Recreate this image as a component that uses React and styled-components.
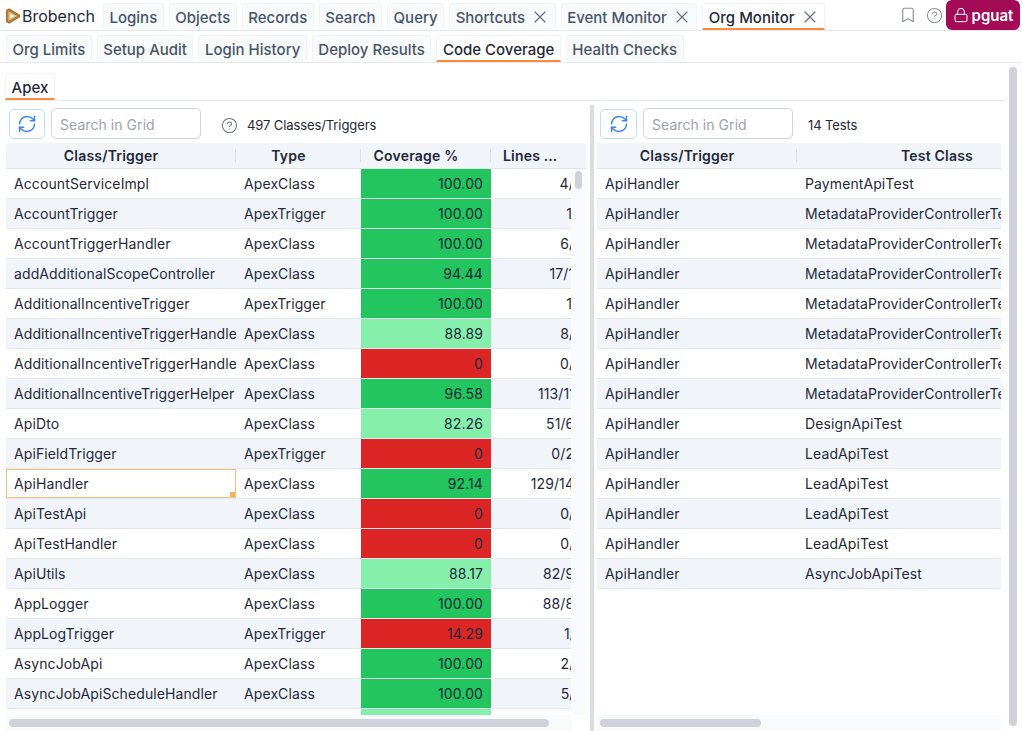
import React from 'react';
import styled, {createGlobalStyle} from 'styled-components';
import {RefreshCw, Bookmark, CircleHelp, X, Lock} from 'lucide-react';

const GlobalStyle = createGlobalStyle`
html, body {
  margin: 0;
  padding: 0;
  height: 100%;
  overflow: hidden;
  background: #fff;
  font-family: Inter, "Liberation Sans", sans-serif;
  font-size: 14px;
  color: #1e293b;
}
* { box-sizing: border-box; }
`;

const Page = styled.div`
width: 1022px;
height: 731px;
display: flex;
flex-direction: column;
overflow: hidden;
`;

const TopBar = styled.div`
height: 31px;
flex: none;
display: flex;
align-items: flex-end;
padding-left: 5px;
border-bottom: 1px solid #e5e9f0;
`;

const Brand = styled.div`
display: flex;
align-items: center;
width: 98px;
height: 30px;
padding-top: 2px;
font-size: 16px;
color: #1f2937;
`;

const BrandIcon = styled.svg`
margin-right: 1px;
flex: none;
`;

const TabRow = styled.div`
display: flex;
gap: 5px;
`;

const Tab = styled.div`
height: 27px;
padding: 2px 5.5px 0;
display: flex;
align-items: center;
font-size: 15px;
font-weight: 500;
white-space: nowrap;
border-radius: 3px 3px 0 0;
border: 1px solid #f1f4f8;
border-bottom: 2px solid ${props => props.$active ? '#fb8c3c' : 'transparent'};
background: ${props => props.$active ? '#fff' : '#f8fafc'};
color: ${props => props.$active ? '#1e293b' : '#475569'};
`;

const TabClose = styled(X)`
color: #64748b;
margin: 0 -1px 0 5px;
flex: none;
`;

const TopRight = styled.div`
margin-left: auto;
display: flex;
align-items: center;
height: 30px;
padding-right: 2px;
color: #8b8f96;
`;

const IconSlot = styled.div`
width: 26px;
display: flex;
justify-content: center;
`;

const OrgButton = styled.div`
width: 74px;
height: 30px;
margin-left: -1px;
border-radius: 6px;
background: #a30b57;
color: #fff;
font-size: 15px;
font-weight: 600;
display: flex;
align-items: center;
justify-content: center;
gap: 3px;
`;

const SubBar = styled.div`
height: 32px;
flex: none;
display: flex;
align-items: flex-end;
padding-left: 6px;
border-bottom: 1px solid #e5e9f0;
`;

const Content = styled.div`
flex: 1;
min-height: 0;
display: flex;
padding-left: 5px;
`;

const Main = styled.div`
width: 1000px;
flex: none;
display: flex;
flex-direction: column;
padding-top: 10px;
`;

const ApexBar = styled.div`
height: 28px;
flex: none;
display: flex;
border-bottom: 1px solid #e5e9f0;
`;

const PageScroll = styled.div`
width: 8px;
margin: 4px 0 5px 4px;
border-radius: 4px;
background: #cfd2da;
`;

const Split = styled.div`
flex: 1;
min-height: 0;
display: flex;
padding: 4px 0 0 1px;
`;

const Pane = styled.div`
width: ${props => props.$width}px;
flex: none;
display: flex;
flex-direction: column;
min-width: 0;
`;

const Divider = styled.div`
width: 4px;
margin: 0 3px 0 4px;
flex: none;
background: #dcdde4;
`;

const Toolbar = styled.div`
height: 38px;
flex: none;
display: flex;
align-items: flex-start;
padding: 4px 0 0 3px;
`;

const RefreshButton = styled.div`
width: ${props => props.$width}px;
height: 30px;
display: flex;
align-items: center;
justify-content: center;
border: 1px solid #bfdbfe;
border-radius: 5px;
color: #3b82f6;
`;

const SearchBox = styled.div`
width: 150px;
height: 31px;
margin: -1px 0 0 6px;
padding: 1px 0 0 8px;
border: 1px solid #d1d5db;
border-radius: 5px;
display: flex;
align-items: center;
font-size: 14px;
letter-spacing: 0.06px;
color: #9ca3af;
`;

const HelpIcon = styled(CircleHelp)`
margin: 8px 0 0 20px;
flex: none;
color: #6b7280;
`;

const Count = styled.div`
margin-left: ${props => props.$gap}px;
height: 31px;
line-height: 33px;
font-size: 13px;
letter-spacing: -0.1px;
color: #1f2937;
`;

const Grid = styled.div`
position: relative;
flex: 1;
min-height: 0;
display: flex;
flex-direction: column;
border-radius: 3px 3px 0 0;
overflow: hidden;
`;

const GridBody = styled.div`
flex: 1;
min-height: 0;
margin-bottom: 16px;
overflow: hidden;
`;

const HeaderRow = styled.div`
height: 26px;
flex: none;
display: flex;
overflow: hidden;
background: #f1f4f9;
border-bottom: 1px solid #dfe3ea;
font-weight: 600;
letter-spacing: 0.2px;
color: #1e293b;
`;

const HeaderCell = styled.div`
width: ${props => props.$width}px;
flex: none;
position: relative;
text-align: center;
line-height: 26px;
white-space: nowrap;
&:not(:last-child)::after {
  content: '';
  position: absolute;
  right: 0;
  top: 6px;
  height: 13px;
  width: 1px;
  background: #d9dde4;
}
`;

const HeaderLabel = styled.div`
padding: 0 32px 0 12px;
overflow: hidden;
text-overflow: ellipsis;
`;

const Row = styled.div`
height: 30px;
display: flex;
background: ${props => props.$odd ? '#f1f4f9' : '#fff'};
border-bottom: 1px solid #e2e8f2;
`;

const Cell = styled.div`
width: ${props => props.$width}px;
flex: none;
padding: 0 8px;
line-height: 30px;
letter-spacing: 0.1px;
white-space: nowrap;
overflow: hidden;
text-align: ${props => props.$right ? 'right' : 'left'};
background: ${props => props.$bg || 'transparent'};
position: relative;
`;

const SelectedCell = styled(Cell)`
border: 1px solid #fbbf77;
background: #fff;
line-height: 28px;
padding: 0 7px;
overflow: visible;
&::after {
  content: '';
  position: absolute;
  right: 0;
  bottom: 0;
  width: 5px;
  height: 5px;
  background: #fdae5c;
}
`;

const HScroll = styled.div`
position: absolute;
left: 0;
right: ${props => props.$right}px;
bottom: 0;
height: 16px;
background: #f9fafc;
padding: 4px 3px;
`;

const HThumb = styled.div`
height: 8px;
width: ${props => props.$width}px;
border-radius: 4px;
background: #cfd2da;
`;

const VScroll = styled.div`
position: absolute;
top: 26px;
right: 0;
bottom: 16px;
width: 15px;
background: #f9fafc;
padding: 2px 4px;
`;

const VThumb = styled.div`
height: 18px;
width: 7px;
border-radius: 4px;
background: #cfd2da;
`;

const BrandMark = () => (
  <BrandIcon width="16" height="18" viewBox="0 0 17 18">
    <path d="M1 2.5 L4.5 0.8 L16 7.8 L16 10.4 L4.5 17.2 L1 15.5 Z" fill="#ad7a3c" />
    <path d="M3.6 4 L13 9.1 L3.6 14.4 Z" fill="#e8bd8a" />
    <path d="M5.8 6.6 L10 9.1 L5.8 11.6 Z" fill="#fff" />
  </BrandIcon>
);

const GREEN = '#22c55e';
const RED = '#dc2626';
const LIGHT = '#86efac';

const classes = [
  ['AccountServiceImpl', 'ApexClass', '100.00', GREEN, '4/4'],
  ['AccountTrigger', 'ApexTrigger', '100.00', GREEN, '1/1'],
  ['AccountTriggerHandler', 'ApexClass', '100.00', GREEN, '6/6'],
  ['addAdditionalScopeController', 'ApexClass', '94.44', GREEN, '17/18'],
  ['AdditionalIncentiveTrigger', 'ApexTrigger', '100.00', GREEN, '1/1'],
  ['AdditionalIncentiveTriggerHandler', 'ApexClass', '88.89', LIGHT, '8/9'],
  ['AdditionalIncentiveTriggerHandlerTest', 'ApexClass', '0', RED, '0/0'],
  ['AdditionalIncentiveTriggerHelper', 'ApexClass', '96.58', GREEN, '113/117'],
  ['ApiDto', 'ApexClass', '82.26', LIGHT, '51/62'],
  ['ApiFieldTrigger', 'ApexTrigger', '0', RED, '0/24'],
  ['ApiHandler', 'ApexClass', '92.14', GREEN, '129/140'],
  ['ApiTestApi', 'ApexClass', '0', RED, '0/6'],
  ['ApiTestHandler', 'ApexClass', '0', RED, '0/5'],
  ['ApiUtils', 'ApexClass', '88.17', LIGHT, '82/93'],
  ['AppLogger', 'ApexClass', '100.00', GREEN, '88/88'],
  ['AppLogTrigger', 'ApexTrigger', '14.29', RED, '1/7'],
  ['AsyncJobApi', 'ApexClass', '100.00', GREEN, '2/2'],
  ['AsyncJobApiScheduleHandler', 'ApexClass', '100.00', GREEN, '5/5'],
  ['AsyncJobHandler', 'ApexClass', '88.00', LIGHT, '22/25'],
];

const tests = [
  'PaymentApiTest',
  'MetadataProviderControllerTest',
  'MetadataProviderControllerTest',
  'MetadataProviderControllerTest',
  'MetadataProviderControllerTest',
  'MetadataProviderControllerTest',
  'MetadataProviderControllerTest',
  'MetadataProviderControllerTest',
  'DesignApiTest',
  'LeadApiTest',
  'LeadApiTest',
  'LeadApiTest',
  'LeadApiTest',
  'AsyncJobApiTest',
];

const mainTabs = ['Logins', 'Objects', 'Records', 'Search', 'Query'];
const closeTabs = ['Shortcuts', 'Event Monitor', 'Org Monitor'];
const subTabs = ['Org Limits', 'Setup Audit', 'Login History', 'Deploy Results', 'Code Coverage', 'Health Checks'];

const App = () => {
  return (
    <Page>
      <GlobalStyle />
      <TopBar>
        <Brand><BrandMark />Brobench</Brand>
        <TabRow>
          {mainTabs.map(t => <Tab key={t}>{t}</Tab>)}
          {closeTabs.map(t => (
            <Tab key={t} $active={t === 'Org Monitor'}>{t}<TabClose size={20} strokeWidth={1.4} /></Tab>
          ))}
        </TabRow>
        <TopRight>
          <IconSlot><Bookmark size={18} strokeWidth={1.5} /></IconSlot>
          <IconSlot><CircleHelp size={17} strokeWidth={1.5} /></IconSlot>
          <OrgButton><Lock size={16} strokeWidth={1.5} />pguat</OrgButton>
        </TopRight>
      </TopBar>
      <SubBar>
        <TabRow>
          {subTabs.map(t => <Tab key={t} $active={t === 'Code Coverage'}>{t}</Tab>)}
        </TabRow>
      </SubBar>
      <Content>
        <Main>
          <ApexBar><Tab $active>Apex</Tab></ApexBar>
          <Split>
            <Pane $width={580}>
              <Toolbar>
                <RefreshButton $width={36}><RefreshCw size={20} strokeWidth={1.75} /></RefreshButton>
                <SearchBox>Search in Grid</SearchBox>
                <HelpIcon size={17} strokeWidth={1.5} />
                <Count $gap={9}>497 Classes/Triggers</Count>
              </Toolbar>
              <Grid>
                <HeaderRow>
                  <HeaderCell $width={230}><HeaderLabel>Class/Trigger</HeaderLabel></HeaderCell>
                  <HeaderCell $width={125}><HeaderLabel>Type</HeaderLabel></HeaderCell>
                  <HeaderCell $width={130}><HeaderLabel>Coverage %</HeaderLabel></HeaderCell>
                  <HeaderCell $width={100}><HeaderLabel>Lines Covered</HeaderLabel></HeaderCell>
                </HeaderRow>
                <GridBody>
                  {classes.map((c, i) => (
                    <Row key={c[0]} $odd={i % 2 === 1}>
                      {c[0] === 'ApiHandler'
                        ? <SelectedCell $width={230}>{c[0]}</SelectedCell>
                        : <Cell $width={230}>{c[0]}</Cell>}
                      <Cell $width={125}>{c[1]}</Cell>
                      <Cell $width={130} $right $bg={c[3]}>{c[2]}</Cell>
                      <Cell $width={100} $right>{c[4]}</Cell>
                    </Row>
                  ))}
                </GridBody>
                <VScroll><VThumb /></VScroll>
                <HScroll $right={15}><HThumb $width={540} /></HScroll>
              </Grid>
            </Pane>
            <Divider />
            <Pane $width={404}>
              <Toolbar>
                <RefreshButton $width={37}><RefreshCw size={20} strokeWidth={1.75} /></RefreshButton>
                <SearchBox>Search in Grid</SearchBox>
                <Count $gap={15}>14 Tests</Count>
              </Toolbar>
              <Grid>
                <HeaderRow>
                  <HeaderCell $width={200}><HeaderLabel>Class/Trigger</HeaderLabel></HeaderCell>
                  <HeaderCell $width={300}><HeaderLabel>Test Class</HeaderLabel></HeaderCell>
                </HeaderRow>
                <GridBody>
                  {tests.map((t, i) => (
                    <Row key={i} $odd={i % 2 === 1}>
                      <Cell $width={200}>ApiHandler</Cell>
                      <Cell $width={300}>{t}</Cell>
                    </Row>
                  ))}
                </GridBody>
                <HScroll $right={0}><HThumb $width={161} /></HScroll>
              </Grid>
            </Pane>
          </Split>
        </Main>
        <PageScroll />
      </Content>
    </Page>
  );
};

export default App;
